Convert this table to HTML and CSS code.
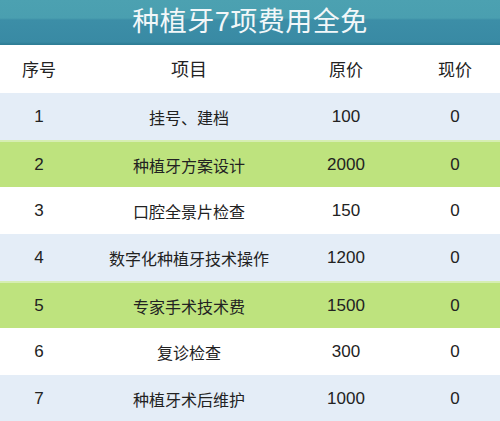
FILE: index.html
```html
<!DOCTYPE html>
<html lang="zh">
<head>
<meta charset="utf-8">
<title>种植牙7项费用全免</title>
<link rel="stylesheet" href="styles.css">
</head>
<body>
<div class="page">
  <div class="title">种植牙7项费用全免</div>
  <div class="row head">
    <div class="c1">序号</div><div class="c2">项目</div><div class="c3">原价</div><div class="c4">现价</div>
  </div>
  <div class="row blue">
    <div class="c1">1</div><div class="c2">挂号、建档</div><div class="c3">100</div><div class="c4">0</div>
  </div>
  <div class="row green">
    <div class="c1">2</div><div class="c2">种植牙方案设计</div><div class="c3">2000</div><div class="c4">0</div>
  </div>
  <div class="row white">
    <div class="c1">3</div><div class="c2">口腔全景片检查</div><div class="c3">150</div><div class="c4">0</div>
  </div>
  <div class="row blue">
    <div class="c1">4</div><div class="c2">数字化种植牙技术操作</div><div class="c3">1200</div><div class="c4">0</div>
  </div>
  <div class="row green">
    <div class="c1">5</div><div class="c2">专家手术技术费</div><div class="c3">1500</div><div class="c4">0</div>
  </div>
  <div class="row white">
    <div class="c1">6</div><div class="c2">复诊检查</div><div class="c3">300</div><div class="c4">0</div>
  </div>
  <div class="row blue">
    <div class="c1">7</div><div class="c2">种植牙术后维护</div><div class="c3">1000</div><div class="c4">0</div>
  </div>
</div>
</body>
</html>
```
FILE: styles.css
```css
html, body {
  margin: 0;
  padding: 0;
  background: #ffffff;
}
.page {
  width: 500px;
  height: 421px;
  overflow: hidden;
  font-family: "Liberation Sans", "Noto Sans CJK SC", sans-serif;
  color: #222222;
}
.title {
  height: 45px;
  box-sizing: border-box;
  background: linear-gradient(to bottom, #4ca1b1 0px, #4a9fb0 18px, #3c8ea7 20px, #398aa4 42px, #2f7e96 44px, #2f7e96 45px);
  color: #f2f7f9;
  font-size: 27px;
  line-height: 44px;
  text-align: center;
  letter-spacing: 0.5px;
}
.row {
  display: grid;
  grid-template-columns: 78px 222px 92px 108px;
  align-items: center;
  height: 47px;
  box-sizing: border-box;
  font-size: 16px;
}
.row > div {
  text-align: center;
}
.row .c4 {
  padding-left: 18px;
}
.head {
  height: 48px;
  background: #ffffff;
  font-size: 18px;
  padding-bottom: 2px;
}
.blue {
  background: #e4edf7;
}
.green {
  background: #bee37e;
  border-top: 2px solid #d6eeb2;
}
.white {
  background: #ffffff;
}
.c3, .c1, .c4 {
  font-size: 17px;
}
```
